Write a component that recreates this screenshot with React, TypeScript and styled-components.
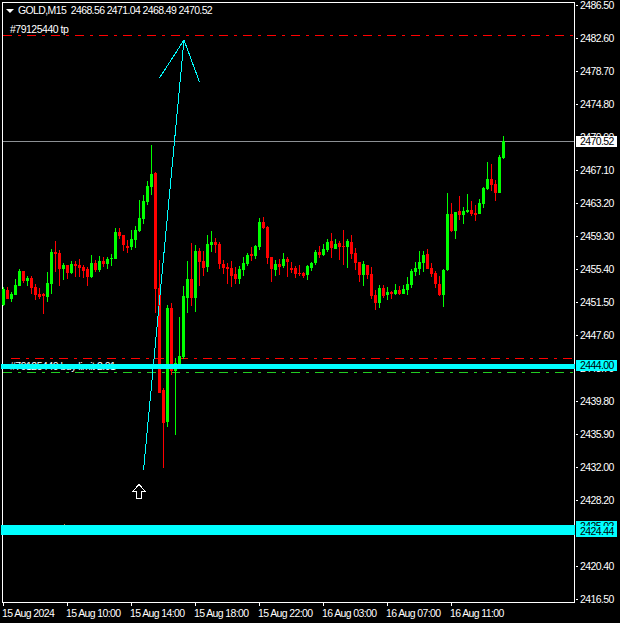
import React from "react";
import styled, { createGlobalStyle } from "styled-components";

const GlobalStyle = createGlobalStyle`
  html, body {
    margin: 0;
    padding: 0;
    background: #000;
  }
`;

const Terminal = styled.div`
  width: 620px;
  height: 623px;
  overflow: hidden;
  display: grid;
  grid-template-columns: 575px 45px;
  grid-template-rows: 603px 20px;
  background: #000;
  color: #fff;
  font-family: "Liberation Sans", Arial, sans-serif;
  font-size: 10.5px;
  letter-spacing: -0.62px;
`;

const Plot = styled.div`
  position: relative;
  margin: 2px 0 0 2px;
  border: 1px solid #fff;
  svg {
    display: block;
    overflow: visible;
  }
  text {
    fill: #fff;
    font-family: "Liberation Sans", Arial, sans-serif;
    font-size: 10.5px;
    letter-spacing: -0.5px;
  }
`;

const Legend = styled.div`
  position: absolute;
  top: 2px;
  left: 3px;
  display: flex;
  align-items: center;
  gap: 4px;
  height: 11px;
  line-height: 11px;
  white-space: pre;
`;

const Caret = styled.span`
  width: 0;
  height: 0;
  border-left: 4px solid transparent;
  border-right: 4px solid transparent;
  border-top: 4px solid #fff;
`;

const PriceAxis = styled.div`
  position: relative;
  display: flex;
  flex-direction: column;
  gap: 22px;
`;

const PriceRow = styled.div`
  display: flex;
  align-items: center;
  height: 11px;
  line-height: 11px;
  &::before {
    content: "";
    width: 2px;
    height: 1px;
    margin: 0 2px 0 1px;
    background: #fff;
  }
`;

const PriceTag = styled.div<{ $top: number; $bg: string; $fg: string }>`
  position: absolute;
  top: ${(p) => p.$top}px;
  left: 1px;
  width: 37px;
  height: 11px;
  padding-left: 4px;
  line-height: 11px;
  background: ${(p) => p.$bg};
  color: ${(p) => p.$fg};
`;

const TimeAxis = styled.div`
  grid-column: 1 / -1;
  display: flex;
  padding-left: 2px;
`;

const TimeCell = styled.div`
  width: 64px;
  flex: none;
  white-space: nowrap;
  line-height: 12px;
  &::before {
    content: "";
    display: block;
    width: 1px;
    height: 3px;
    margin: 0 0 1px 1px;
    background: #fff;
  }
`;

type Candle = ["g" | "r", number, number, number, number];

// wick top, body top, body bottom, wick bottom (page pixels)
const candles: Candle[] = [
  ["g", 287, 289, 305, 306], ["r", 287, 290, 299, 299], ["g", 292, 294, 299, 302], ["g", 279, 285, 295, 295],
  ["g", 269, 271, 286, 286], ["r", 271, 271, 281, 283], ["g", 276, 278, 281, 286], ["r", 276, 278, 288, 294],
  ["r", 284, 287, 295, 300], ["r", 288, 294, 297, 299], ["r", 293, 294, 296, 314], ["g", 272, 283, 297, 302],
  ["g", 249, 252, 284, 294], ["r", 241, 252, 254, 272], ["r", 250, 253, 269, 286], ["g", 263, 265, 269, 280],
  ["r", 265, 265, 273, 279], ["g", 261, 264, 273, 274], ["r", 261, 264, 266, 277], ["r", 259, 265, 268, 277],
  ["r", 265, 267, 271, 278], ["r", 267, 269, 277, 286], ["g", 255, 263, 277, 278], ["r", 260, 263, 270, 272],
  ["g", 256, 261, 270, 272], ["r", 257, 261, 264, 267], ["g", 257, 259, 264, 269], ["g", 254, 258, 259, 266],
  ["g", 228, 232, 259, 259], ["r", 228, 232, 236, 239], ["r", 235, 235, 245, 251], ["r", 240, 246, 248, 253],
  ["g", 230, 239, 247, 250], ["g", 226, 230, 240, 248], ["g", 200, 218, 231, 232], ["g", 195, 201, 219, 224],
  ["g", 181, 186, 202, 205], ["g", 145, 174, 187, 195], ["r", 172, 173, 289, 313], ["r", 260, 288, 393, 393],
  ["r", 388, 390, 423, 468], ["g", 305, 308, 422, 427], ["r", 303, 308, 371, 375], ["g", 358, 363, 371, 435],
  ["g", 317, 356, 364, 364], ["g", 286, 296, 357, 359], ["g", 261, 279, 298, 313], ["r", 243, 279, 298, 306],
  ["g", 245, 251, 298, 312], ["r", 248, 251, 262, 286], ["r", 251, 261, 268, 276], ["g", 235, 244, 267, 272],
  ["g", 231, 242, 245, 252], ["r", 238, 242, 245, 253], ["r", 242, 244, 264, 269], ["r", 260, 264, 268, 274],
  ["r", 263, 267, 269, 284], ["r", 261, 268, 276, 287], ["r", 267, 274, 279, 284], ["g", 266, 269, 279, 284],
  ["g", 257, 263, 270, 276], ["g", 253, 255, 264, 266], ["r", 247, 254, 256, 261], ["g", 245, 246, 256, 259],
  ["g", 218, 222, 247, 250], ["r", 217, 222, 228, 229], ["r", 226, 227, 258, 264], ["r", 257, 257, 269, 282],
  ["g", 260, 264, 270, 276], ["r", 259, 264, 267, 275], ["g", 253, 259, 266, 268], ["r", 257, 259, 262, 277],
  ["r", 262, 268, 270, 273], ["r", 266, 268, 274, 278], ["r", 265, 273, 274, 276], ["r", 272, 273, 276, 278],
  ["g", 265, 266, 275, 280], ["g", 262, 263, 268, 271], ["g", 250, 252, 263, 265], ["r", 246, 252, 255, 258],
  ["g", 244, 249, 255, 256], ["g", 239, 242, 250, 252], ["r", 233, 241, 248, 258], ["g", 239, 244, 249, 249],
  ["r", 241, 243, 247, 260], ["r", 230, 246, 247, 265], ["g", 239, 241, 247, 268], ["r", 235, 242, 254, 259],
  ["r", 248, 253, 263, 270], ["r", 262, 262, 275, 282], ["g", 261, 264, 275, 286], ["r", 265, 265, 275, 279],
  ["r", 267, 274, 296, 299], ["r", 290, 295, 303, 310], ["g", 285, 288, 303, 308], ["r", 285, 288, 296, 298],
  ["g", 287, 292, 295, 300], ["r", 291, 292, 294, 299], ["g", 284, 290, 294, 295], ["r", 286, 290, 294, 295],
  ["g", 285, 289, 294, 294], ["g", 277, 284, 290, 295], ["g", 269, 271, 285, 288], ["g", 262, 268, 272, 276],
  ["g", 251, 262, 269, 275], ["g", 251, 255, 263, 272], ["r", 249, 254, 269, 269], ["r", 263, 268, 274, 277],
  ["r", 271, 273, 284, 288], ["r", 276, 284, 295, 296], ["g", 269, 270, 295, 307], ["g", 193, 214, 270, 271],
  ["r", 203, 214, 231, 232], ["g", 212, 212, 231, 239], ["r", 196, 211, 215, 220], ["g", 207, 211, 215, 224],
  ["g", 194, 210, 212, 213], ["r", 201, 210, 214, 216], ["r", 205, 213, 215, 221], ["g", 199, 203, 214, 214],
  ["g", 187, 188, 204, 208], ["g", 162, 179, 189, 190], ["r", 164, 179, 185, 191], ["r", 180, 184, 193, 201],
  ["g", 155, 157, 193, 193], ["g", 136, 141, 158, 159],
];

const prices = [
  "2486.50", "2482.60", "2478.70", "2474.80", "2470.90", "2467.10", "2463.20", "2459.30", "2455.40", "2451.50",
  "2447.60", "2443.70", "2439.80", "2435.90", "2432.00", "2428.20", "2424.30", "2420.40", "2416.50",
];

const tags = [
  { top: 136, bg: "#fff", fg: "#000", label: "2470.52" },
  { top: 360, bg: "#00ffff", fg: "#000", label: "2444.00" },
  { top: 521, bg: "#00ffff", fg: "#000", label: "2425.02" },
  { top: 526, bg: "#00ffff", fg: "#000", label: "2424.44" },
];

const times = [
  "15 Aug 2024", "15 Aug 10:00", "15 Aug 14:00", "15 Aug 18:00",
  "15 Aug 22:00", "16 Aug 03:00", "16 Aug 07:00", "16 Aug 11:00",
];

const GREEN = "#00ff00";
const RED = "#ff0000";
const CYAN = "#00ffff";
const DASH_DOT = "9 6 3 6";

function Chart() {
  return (
    <svg width={571} height={599} viewBox="3 3 571 599">
      <text x={10} y={33}>#79125440 tp</text>
      <text x={10} y={370}>#79125440 buy limit 2.01</text>
      <rect x={64} y={524} width={1} height={1} fill="#c8823c" />

      <line x1={3} x2={574} y1={141.5} y2={141.5} stroke="#8c9094" />
      <line x1={3} x2={574} y1={35.5} y2={35.5} stroke={RED} strokeDasharray={DASH_DOT} />
      <line x1={11} x2={574} y1={358.5} y2={358.5} stroke={RED} strokeDasharray={DASH_DOT} />
      <line x1={3} x2={574} y1={372.5} y2={372.5} stroke="#22cc22" strokeDasharray={DASH_DOT} />

      {candles.map(([kind, wickTop, top, bottom, wickBottom], i) => (
        <g key={i} fill={kind === "g" ? GREEN : RED}>
          <rect x={3 + 4 * i} y={wickTop} width={1} height={wickBottom - wickTop} />
          <rect x={2 + 4 * i} y={top} width={3} height={bottom - top} />
        </g>
      ))}

      <rect x={1} y={364} width={574} height={5} fill={CYAN} />
      <rect x={1} y={525} width={574} height={10} fill={CYAN} />

      <g fill="none" stroke={CYAN} shapeRendering="crispEdges">
        <line x1={143.5} y1={470.5} x2={184} y2={40} />
        <line x1={159.5} y1={78} x2={184} y2={40} />
        <line x1={199.5} y1={82} x2={184} y2={40} />
      </g>

      <path
        d="M139 484.5 L132.5 491.5 H136.5 V498.5 H141.5 V491.5 H145.5 Z"
        fill="#000"
        stroke="#fff"
        shapeRendering="crispEdges"
      />
    </svg>
  );
}

function App() {
  return (
    <>
      <GlobalStyle />
      <Terminal>
        <Plot>
          <Chart />
          <Legend>
            <Caret />
            <span>GOLD,M15  2468.56 2471.04 2468.49 2470.52</span>
          </Legend>
        </Plot>
        <PriceAxis>
          {prices.map((p) => (
            <PriceRow key={p}>{p}</PriceRow>
          ))}
          {tags.map((t) => (
            <PriceTag key={t.label} $top={t.top} $bg={t.bg} $fg={t.fg}>
              {t.label}
            </PriceTag>
          ))}
        </PriceAxis>
        <TimeAxis>
          {times.map((t) => (
            <TimeCell key={t}>{t}</TimeCell>
          ))}
        </TimeAxis>
      </Terminal>
    </>
  );
}

export default App;
